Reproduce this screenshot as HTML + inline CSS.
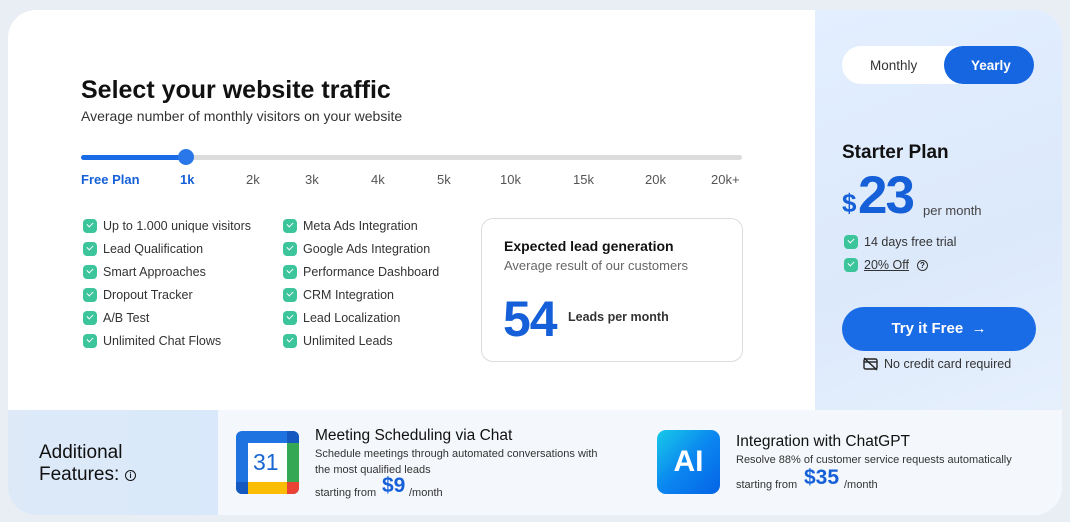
<!DOCTYPE html><html><head><style>
*{margin:0;padding:0;box-sizing:border-box}
body{width:1070px;height:522px;background:#e9eef4;font-family:"Liberation Sans",sans-serif;position:relative;overflow:hidden;color:#1a1d24}
.a{position:absolute;white-space:nowrap}
.card{position:absolute;left:8px;top:10px;width:1054px;height:505px;border-radius:28px;background:#fff;overflow:hidden}
.cb{position:absolute;width:14px;height:14px;border-radius:4px;background:#3cc49a}
.cb:after{content:"";position:absolute;left:4px;top:3px;width:5px;height:3px;border-left:1.6px solid #fff;border-bottom:1.6px solid #fff;transform:rotate(-45deg)}
.ft{font-size:12.5px;color:#333}
.lb{font-size:13px;color:#555;top:172px}
</style></head><body>
<div class="card">
<div class="a" style="left:807px;top:0;width:247px;height:400px;background:linear-gradient(160deg,#e3efff,#dce9fb 60%,#e6f0fd)"></div>
<div class="a" style="left:0;top:400px;width:1054px;height:105px;background:#f4f7fb"></div>
<div class="a" style="left:0;top:400px;width:210px;height:105px;background:linear-gradient(90deg,#dde9f7,#d9e9fb)"></div>
</div>
<div class="a" style="left:81px;top:76px;font-size:25px;font-weight:bold;color:#111">Select your website traffic</div>
<div class="a" style="left:81px;top:108px;font-size:14px;color:#333">Average number of monthly visitors on your website</div>
<div class="a" style="left:81px;top:155px;width:661px;height:5px;border-radius:3px;background:#dcdcdc"></div>
<div class="a" style="left:81px;top:155px;width:105px;height:5px;border-radius:3px;background:#1a6be6"></div>
<div class="a" style="left:178px;top:149px;width:16px;height:16px;border-radius:50%;background:#2a77ea"></div>
<div class="a" style="left:81px;top:172px;font-size:13px;font-weight:bold;color:#1560d8">Free Plan</div>
<div class="a" style="left:180px;top:172px;font-size:13px;font-weight:bold;color:#1560d8">1k</div>
<div class="a lb" style="left:246px">2k</div><div class="a lb" style="left:305px">3k</div><div class="a lb" style="left:371px">4k</div><div class="a lb" style="left:437px">5k</div><div class="a lb" style="left:500px">10k</div><div class="a lb" style="left:573px">15k</div><div class="a lb" style="left:645px">20k</div><div class="a lb" style="left:711px">20k+</div>

<div class="cb" style="left:83px;top:219px"></div><div class="a ft" style="left:103px;top:219px">Up to 1.000 unique visitors</div>
<div class="cb" style="left:83px;top:242px"></div><div class="a ft" style="left:103px;top:242px">Lead Qualification</div>
<div class="cb" style="left:83px;top:265px"></div><div class="a ft" style="left:103px;top:265px">Smart Approaches</div>
<div class="cb" style="left:83px;top:288px"></div><div class="a ft" style="left:103px;top:288px">Dropout Tracker</div>
<div class="cb" style="left:83px;top:311px"></div><div class="a ft" style="left:103px;top:311px">A/B Test</div>
<div class="cb" style="left:83px;top:334px"></div><div class="a ft" style="left:103px;top:334px">Unlimited Chat Flows</div>
<div class="cb" style="left:283px;top:219px"></div><div class="a ft" style="left:303px;top:219px">Meta Ads Integration</div>
<div class="cb" style="left:283px;top:242px"></div><div class="a ft" style="left:303px;top:242px">Google Ads Integration</div>
<div class="cb" style="left:283px;top:265px"></div><div class="a ft" style="left:303px;top:265px">Performance Dashboard</div>
<div class="cb" style="left:283px;top:288px"></div><div class="a ft" style="left:303px;top:288px">CRM Integration</div>
<div class="cb" style="left:283px;top:311px"></div><div class="a ft" style="left:303px;top:311px">Lead Localization</div>
<div class="cb" style="left:283px;top:334px"></div><div class="a ft" style="left:303px;top:334px">Unlimited Leads</div>

<div class="a" style="left:481px;top:218px;width:262px;height:144px;border:1px solid #dcdcdc;border-radius:12px"></div>
<div class="a" style="left:504px;top:238px;font-size:14px;font-weight:bold;color:#111">Expected lead generation</div>
<div class="a" style="left:504px;top:258px;font-size:13px;color:#666">Average result of our customers</div>
<div class="a" style="left:503px;top:290px;font-size:50px;font-weight:bold;color:#1560d8;letter-spacing:-1px">54</div>
<div class="a" style="left:568px;top:310px;font-size:12.5px;font-weight:bold;color:#333">Leads per month</div>

<div class="a" style="left:842px;top:46px;width:192px;height:38px;border-radius:19px;background:#fff"></div>
<div class="a" style="left:944px;top:46px;width:90px;height:38px;border-radius:19px;background:#1566e0"></div>
<div class="a" style="left:870px;top:58px;font-size:13.5px;color:#333">Monthly</div>
<div class="a" style="left:971px;top:58px;font-size:13.5px;font-weight:bold;color:#fff">Yearly</div>
<div class="a" style="left:842px;top:142px;font-size:19px;font-weight:bold;color:#111">Starter Plan</div>
<div class="a" style="left:842px;top:188px;font-size:26px;font-weight:bold;color:#1560d8">$</div>
<div class="a" style="left:858px;top:165px;font-size:53px;font-weight:bold;color:#1560d8;letter-spacing:-2px">23</div>
<div class="a" style="left:923px;top:203px;font-size:13px;color:#444">per month</div>
<div class="cb" style="left:844px;top:235px"></div><div class="a ft" style="left:864px;top:235px">14 days free trial</div>
<div class="cb" style="left:844px;top:258px"></div><div class="a ft" style="left:864px;top:258px;text-decoration:underline">20% Off</div>
<div class="a" style="left:917px;top:260px;width:11px;height:11px;border:1.3px solid #333;border-radius:50%;font-size:8px;line-height:9px;text-align:center;font-weight:bold">?</div>
<div class="a" style="left:842px;top:307px;width:194px;height:44px;border-radius:22px;background:#1a6be6;color:#fff;font-size:15px;font-weight:bold;text-align:center;line-height:44px">Try it Free &nbsp;<span style="font-weight:normal">→</span></div>
<svg class="a" style="left:863px;top:357px" width="15" height="14" viewBox="0 0 15 14"><rect x="1" y="2" width="13" height="10" rx="1.5" fill="none" stroke="#222" stroke-width="1.4"/><line x1="1" y1="5" x2="14" y2="5" stroke="#222" stroke-width="1.4"/><line x1="1" y1="1" x2="14" y2="13" stroke="#222" stroke-width="1.4"/></svg>
<div class="a" style="left:884px;top:357px;font-size:12.5px;color:#333">No credit card required</div>

<div class="a" style="left:39px;top:442px;font-size:19px;color:#111;line-height:22px">Additional<br>Features:</div>
<div class="a" style="left:125px;top:470px;width:11px;height:11px;border:1.2px solid #111;border-radius:50%;font-size:8px;line-height:9px;text-align:center;font-weight:bold">i</div>

<div class="a" style="left:236px;top:431px;width:63px;height:63px;border-radius:6px;background:#1e73e0;overflow:hidden">
<div class="a" style="left:12px;top:12px;width:39px;height:39px;background:#fff"></div>
<div class="a" style="left:51px;top:12px;width:12px;height:39px;background:#34a853"></div>
<div class="a" style="left:12px;top:51px;width:39px;height:12px;background:#fbbc04"></div>
<div class="a" style="left:51px;top:51px;width:12px;height:12px;background:#ea4335"></div>
<div class="a" style="left:51px;top:0;width:12px;height:12px;background:#1558c0"></div>
<div class="a" style="left:0;top:51px;width:12px;height:12px;background:#1558c0"></div>
<div class="a" style="left:17px;top:18px;font-size:23px;color:#1a66d2">31</div>
</div>
<div class="a" style="left:315px;top:427px;font-size:15.5px;color:#111">Meeting Scheduling via Chat</div>
<div class="a" style="left:315px;top:446px;font-size:11px;color:#333;line-height:16px">Schedule meetings through automated conversations with<br>the most qualified leads</div>
<div class="a" style="left:315px;top:487px;font-size:11px;color:#333">starting from</div>
<div class="a" style="left:382px;top:474px;font-size:21px;font-weight:bold;color:#1560d8">$9</div>
<div class="a" style="left:409px;top:487px;font-size:11px;color:#333">/month</div>

<div class="a" style="left:657px;top:430px;width:63px;height:64px;border-radius:9px;background:linear-gradient(135deg,#18c9e8,#0a86f0 50%,#0563e6);color:#fff;font-size:30px;font-weight:bold;text-align:center;line-height:64px">AI</div>
<div class="a" style="left:736px;top:433px;font-size:15.5px;color:#111">Integration with ChatGPT</div>
<div class="a" style="left:736px;top:454px;font-size:11px;color:#333">Resolve 88% of customer service requests automatically</div>
<div class="a" style="left:736px;top:479px;font-size:11px;color:#333">starting from</div>
<div class="a" style="left:804px;top:466px;font-size:21px;font-weight:bold;color:#1560d8">$35</div>
<div class="a" style="left:844px;top:479px;font-size:11px;color:#333">/month</div>
</body></html>
